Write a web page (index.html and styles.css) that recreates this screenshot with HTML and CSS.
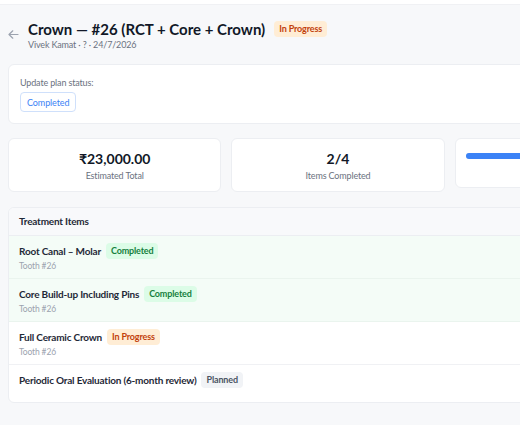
FILE: index.html
```html
<!DOCTYPE html>
<html>
<head>
  <link rel="stylesheet" href="styles.css">
</head>
<body>
  <div class="topbar"></div>

  <div class="page">
    <div class="plan-header">
      <a class="back" href="#">
        <svg width="11" height="9" viewBox="0 0 11 9" fill="none" stroke="#9ca3af" stroke-width="1.2" stroke-linecap="round" stroke-linejoin="round">
          <path d="M10 4.5H1M4.8 0.8L1 4.5l3.8 3.7"/>
        </svg>
      </a>
      <div class="plan-title-wrap">
        <div class="plan-title">
          <h1>Crown — #26 (RCT + Core + Crown)</h1>
          <span class="badge badge-progress">In Progress</span>
        </div>
        <div class="plan-meta">Vivek Kamat · ? · 24/7/2026</div>
      </div>
    </div>

    <div class="card status-card">
      <div class="status-label">Update plan status:</div>
      <button class="status-btn">Completed</button>
    </div>

    <div class="stats">
      <div class="card stat">
        <div class="stat-value">₹23,000.00</div>
        <div class="stat-label">Estimated Total</div>
      </div>
      <div class="card stat">
        <div class="stat-value">2/4</div>
        <div class="stat-label">Items Completed</div>
      </div>
      <div class="card stat stat-progress">
        <div class="progress"><div class="progress-fill" style="width: 50%"></div></div>
      </div>
    </div>

    <div class="card items">
      <div class="items-head">Treatment Items</div>
      <div class="item done">
        <div class="item-top">
          <span class="item-name">Root Canal – Molar</span>
          <span class="badge badge-done">Completed</span>
        </div>
        <div class="item-meta">Tooth #26</div>
      </div>
      <div class="item done">
        <div class="item-top">
          <span class="item-name">Core Build-up Including Pins</span>
          <span class="badge badge-done">Completed</span>
        </div>
        <div class="item-meta">Tooth #26</div>
      </div>
      <div class="item">
        <div class="item-top">
          <span class="item-name">Full Ceramic Crown</span>
          <span class="badge badge-progress">In Progress</span>
        </div>
        <div class="item-meta">Tooth #26</div>
      </div>
      <div class="item last">
        <div class="item-top">
          <span class="item-name">Periodic Oral Evaluation (6-month review)</span>
          <span class="badge badge-planned">Planned</span>
        </div>
      </div>
    </div>
  </div>
</body>
</html>
```

FILE: styles.css
```css
body {
  margin: 0;
  background: #f7f8fa;
  font-family: Lato, "Noto Sans", sans-serif;
  color: #111827;
  letter-spacing: -0.15px;
  overflow: hidden;
}

.topbar {
  height: 4px;
  background: #fff;
  border-bottom: 1px solid #f0f1f4;
}

.page {
  width: 660px;
  padding: 0 8px 20px;
}

/* title row with back arrow */
.plan-header {
  display: flex;
  align-items: flex-start;
  gap: 9px;
  padding: 14px 0 13px;
}

.back {
  display: flex;
  margin-top: 11px;
}

.plan-title {
  display: flex;
  align-items: center;
  gap: 9px;
}

.plan-title h1 {
  margin: 0;
  font-size: 15px;
  font-weight: 700;
  line-height: 20px;
  letter-spacing: 0;
  color: #111827;
}

.plan-meta {
  font-size: 9px;
  color: #6b7280;
  line-height: 12px;
}

.badge {
  display: inline-block;
  font-size: 9px;
  font-weight: 700;
  line-height: 16px;
  padding: 0 5px;
  border-radius: 4px;
}

.badge-progress {
  background: #ffedd5;
  color: #c2410c;
}

.badge-done {
  background: #dcfce7;
  color: #15803d;
}

.badge-planned {
  background: #f1f3f6;
  color: #4b5563;
}

.card {
  background: #fff;
  border: 1px solid #eceef2;
  border-radius: 6px;
}

.status-card {
  display: flex;
  flex-direction: column;
  align-items: flex-start;
  padding: 11px;
  margin-bottom: 14px;
}

.status-label {
  font-size: 9px;
  color: #6b7280;
  line-height: 14px;
  margin-bottom: 2px;
}

.status-btn {
  font-family: inherit;
  font-size: 9px;
  letter-spacing: -0.1px;
  color: #3b82f6;
  background: #fff;
  border: 1px solid #cfe0fb;
  border-radius: 4px;
  height: 20px;
  padding: 0 6px;
}

.stats {
  display: grid;
  grid-template-columns: repeat(3, 1fr);
  gap: 10px;
  margin-bottom: 15px;
}

.stat {
  display: flex;
  flex-direction: column;
  align-items: center;
  padding: 10px 10px 8px;
}

.stat-value {
  font-size: 14px;
  font-weight: 700;
  line-height: 20px;
  letter-spacing: 0;
}

.stat-label {
  font-size: 9px;
  color: #6b7280;
  line-height: 14px;
}

.stat-progress {
  display: block;
  padding-top: 14px;
  height: 26px;
}

.progress {
  height: 6px;
  background: #e5e7eb;
  border-radius: 3px;
}

.progress-fill {
  height: 100%;
  background: #3b82f6;
  border-radius: 3px;
}

/* treatment list */
.items {
  overflow: hidden;
}

.items-head {
  font-size: 10px;
  font-weight: 700;
  letter-spacing: -0.2px;
  color: #1f2937;
  background: #f8f9fb;
  height: 27px;
  line-height: 27px;
  padding: 0 10px;
  border-bottom: 1px solid #eceef2;
}

.item {
  padding: 7px 10px 6px;
  border-bottom: 1px solid #f0f1f4;
}

.item.done {
  background: #f4fcf7;
  border-bottom-color: #eaf4ee;
}

.item.last {
  border-bottom: 0;
  padding-bottom: 14px;
}

.item-top {
  display: flex;
  align-items: center;
  gap: 5px;
  height: 16px;
}

.item-name {
  font-size: 10px;
  font-weight: 700;
  letter-spacing: -0.2px;
  color: #1f2937;
}

.item-meta {
  font-size: 8.5px;
  color: #9ca3af;
  line-height: 12px;
  margin-top: 1px;
}
```
